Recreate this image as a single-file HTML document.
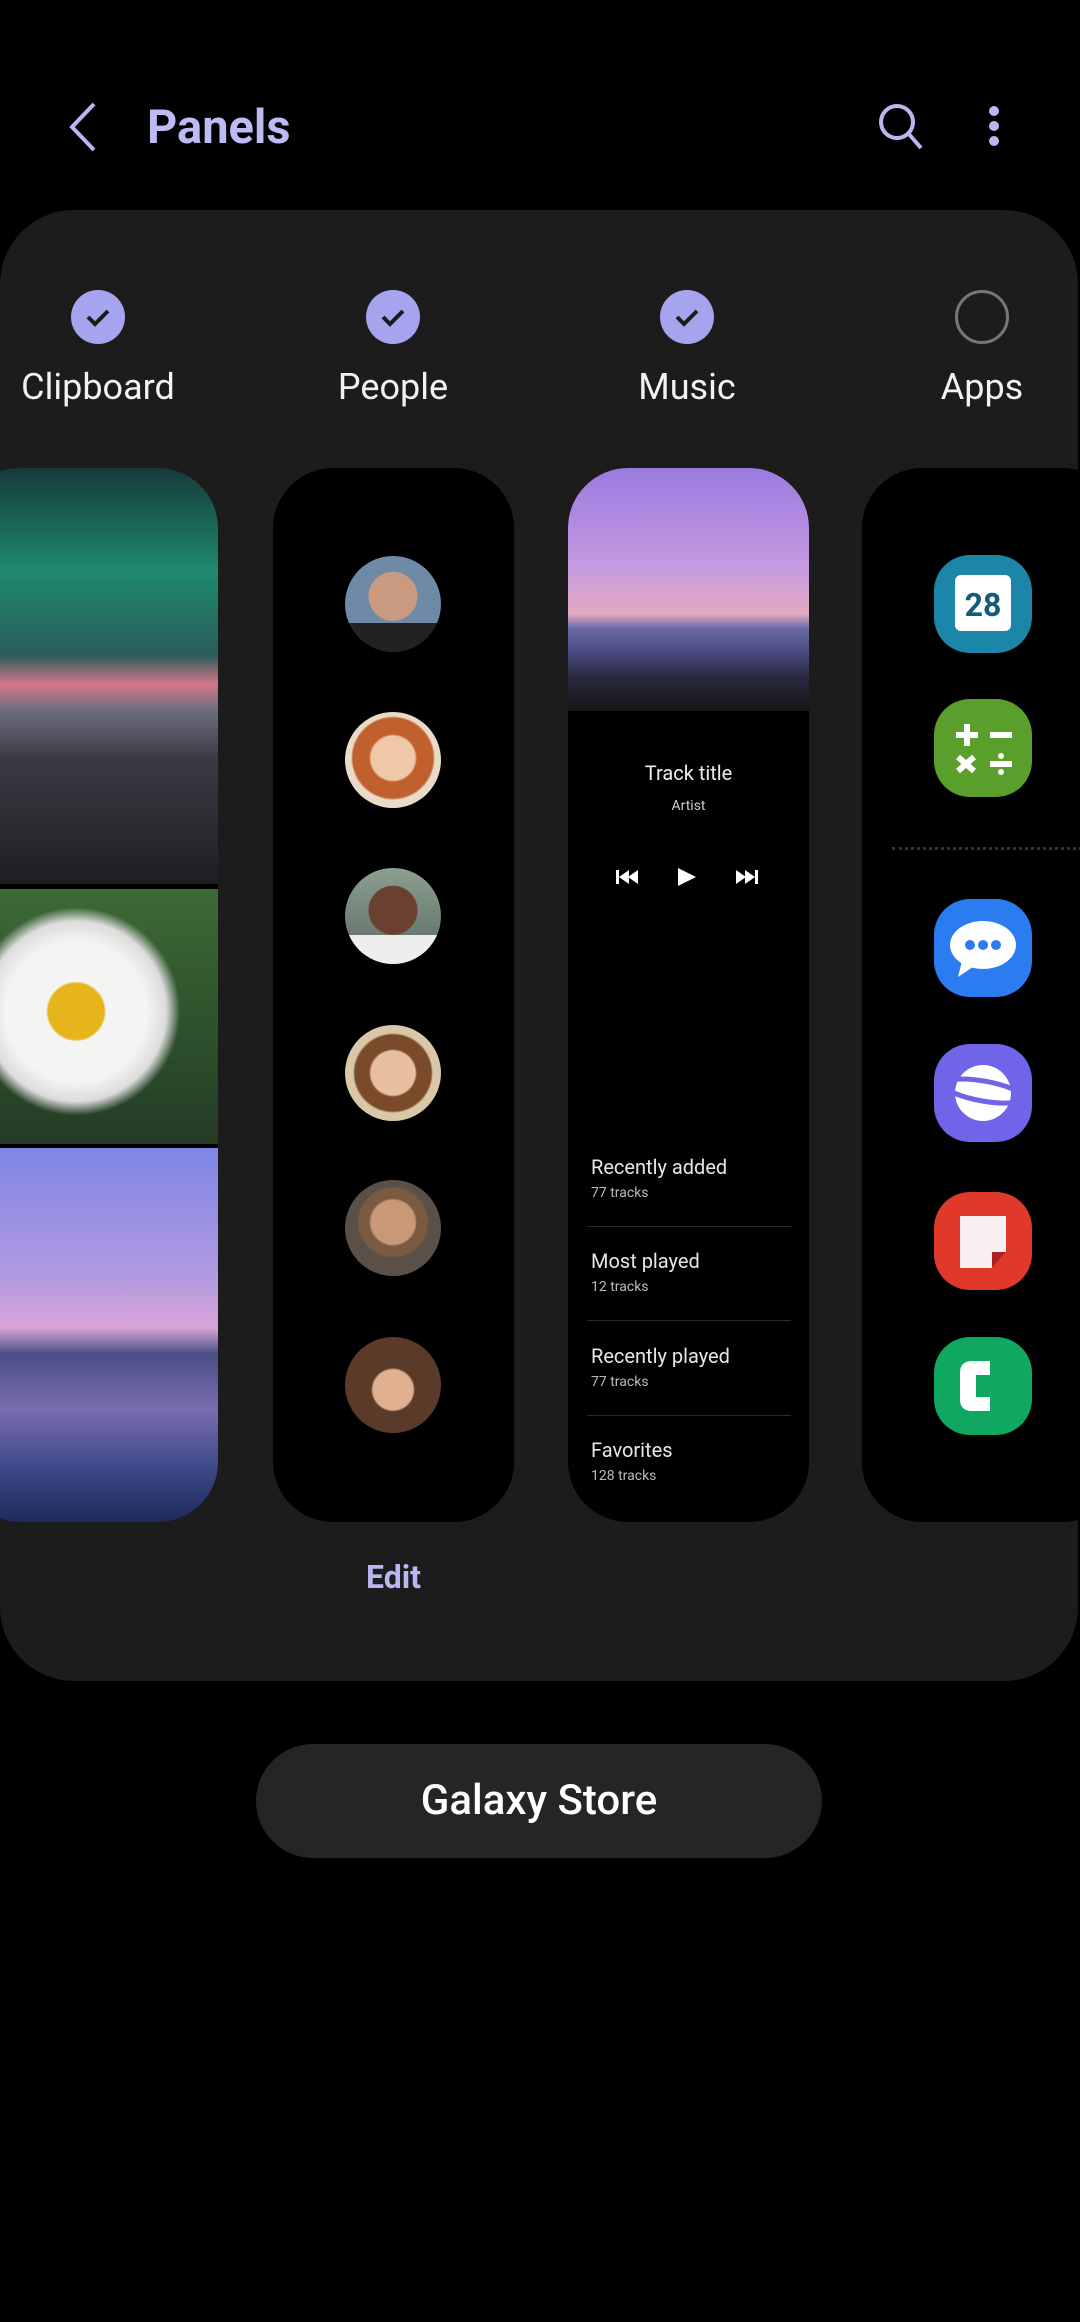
<!DOCTYPE html>
<html><head><meta charset="utf-8">
<style>
*{margin:0;padding:0;box-sizing:border-box}
body{width:1080px;height:2322px;background:#000;position:relative;overflow:hidden;font-family:"Roboto","Liberation Sans",sans-serif;color:#fff}
.abs{position:absolute}
.card{left:0;top:210px;width:1078px;height:1471px;background:#1c1c1c;border-radius:74px}
.chk{width:54px;height:54px;border-radius:50%;background:#a6a4ee;top:290px}
.chk svg{position:absolute;left:0;top:0}
.lbl{top:366px;font-size:36px;width:240px;text-align:center;color:#f2f2f2}
.panel{top:468px;height:1054px;background:#000;border-radius:60px;overflow:hidden}
.av{width:96px;height:96px;border-radius:50%;left:345px;overflow:hidden}
.item{left:591px;font-size:20px;color:#e6e6e6}
.item small{display:block;font-size:14px;color:#bbb;margin-top:6px}
.div{left:587px;width:204px;height:1px;background:#2a2a2a}
.app{left:934px;width:98px;height:98px;border-radius:36px}
</style></head><body>
<svg class="abs" style="left:62px;top:100px" width="40" height="54" viewBox="0 0 40 54"><path d="M32 4 L10 27 L32 50" fill="none" stroke="#b9b7f2" stroke-width="4"/></svg>
<div class="abs" style="left:147px;top:100px;font-size:47px;font-weight:bold;color:#bdbbf4">Panels</div>
<svg class="abs" style="left:874px;top:100px" width="54" height="54" viewBox="0 0 54 54"><circle cx="23" cy="22" r="16" fill="none" stroke="#b9b7f2" stroke-width="4"/><path d="M34 33 L47 48" stroke="#b9b7f2" stroke-width="4"/></svg>
<div class="abs" style="left:989px;top:106px;width:10px;height:10px;border-radius:50%;background:#b9b7f2"></div>
<div class="abs" style="left:989px;top:121px;width:10px;height:10px;border-radius:50%;background:#b9b7f2"></div>
<div class="abs" style="left:989px;top:136px;width:10px;height:10px;border-radius:50%;background:#b9b7f2"></div>

<div class="abs card"></div>
<div class="abs chk" style="left:71px"><svg width="54" height="54"><path d="M17 27 L24 34 L37 21" fill="none" stroke="#1c1c1c" stroke-width="4"/></svg></div>
<div class="abs chk" style="left:366px"><svg width="54" height="54"><path d="M17 27 L24 34 L37 21" fill="none" stroke="#1c1c1c" stroke-width="4"/></svg></div>
<div class="abs chk" style="left:660px"><svg width="54" height="54"><path d="M17 27 L24 34 L37 21" fill="none" stroke="#1c1c1c" stroke-width="4"/></svg></div>
<div class="abs chk" style="left:955px;background:none;border:3px solid #777"></div>
<div class="abs lbl" style="left:-22px">Clipboard</div>
<div class="abs lbl" style="left:273px">People</div>
<div class="abs lbl" style="left:567px">Music</div>
<div class="abs lbl" style="left:862px">Apps</div>

<div class="abs panel" style="left:-40px;width:258px">
 <div class="abs" style="left:0;top:0;width:258px;height:416px;background:linear-gradient(180deg,#163a3a 0%,#1f8a6e 25%,#2a5c5a 45%,#d4758a 52%,#6f6e80 58%,#3a3a44 70%,#1e1e22 100%)"></div>
 <div class="abs" style="left:0;top:421px;width:258px;height:255px;background:radial-gradient(circle at 45% 48%,#e6b51c 0 28px,#f4f4f2 30px 70px,#dcdcdc 90px,transparent 104px),linear-gradient(180deg,#3d6a36,#2a4a2a 70%,#253a25)"></div>
 <div class="abs" style="left:0;top:680px;width:258px;height:374px;background:linear-gradient(180deg,#7d86e6 0%,#b39ae0 35%,#d9a5d8 48%,#4a4f86 55%,#7a6cb0 70%,#3e4a8a 85%,#1e2a5a 100%)"></div>
</div>
<div class="abs panel" style="left:273px;width:241px"></div>
<div class="abs av" style="top:556px;background:radial-gradient(circle at 50% 42%,#c99a80 0 24px,transparent 25px),linear-gradient(180deg,#6e8aa6 0,#6e8aa6 70%,#222 70%)"></div>
<div class="abs av" style="top:712px;background:radial-gradient(circle at 50% 48%,#f0c8a8 0 22px,#c0602c 24px 40px,#e8dcc8 42px)"></div>
<div class="abs av" style="top:868px;background:radial-gradient(circle at 50% 44%,#6a4030 0 24px,transparent 25px),linear-gradient(180deg,#8aa090,#6a7a70 70%,#eee 70%)"></div>
<div class="abs av" style="top:1025px;background:radial-gradient(circle at 50% 50%,#e8c0a0 0 22px,#7a4a2a 24px 38px,#d8c8a8 40px)"></div>
<div class="abs av" style="top:1180px;background:radial-gradient(circle at 50% 44%,#c89878 0 22px,#7a5a40 24px 34px,#5a5048 36px)"></div>
<div class="abs av" style="top:1337px;background:radial-gradient(circle at 50% 55%,#e0b090 0 20px,#5a3a28 22px,#5a3a28 100%),linear-gradient(#d8ccc0,#d8ccc0)"></div>

<div class="abs panel" style="left:568px;width:241px">
 <div class="abs" style="left:0;top:0;width:241px;height:243px;background:linear-gradient(180deg,#9a7ae0 0%,#c49ae0 40%,#e4a8c0 60%,#6a6aa8 66%,#4a4a80 76%,#2a2a40 86%,#151518 100%)"></div>
 <div class="abs" style="left:0;top:293px;width:241px;text-align:center;font-size:20px;color:#eee">Track title</div>
 <div class="abs" style="left:0;top:330px;width:241px;text-align:center;font-size:14px;color:#ccc">Artist</div>
 <svg class="abs" style="left:48px;top:398px" width="150" height="22" viewBox="0 0 150 22"><path d="M0 4h3v14h-3z M3 11l10-7v14z M12 11l10-7v14z" fill="#fff"/><path d="M62 2l18 9-18 9z" fill="#fff"/><path d="M120 4l10 7-10 7z M129 4l10 7-10 7z M139 4h3v14h-3z" fill="#fff"/></svg>
</div>
<div class="abs item" style="top:1155px">Recently added<small>77 tracks</small></div>
<div class="abs div" style="top:1226px"></div>
<div class="abs item" style="top:1249px">Most played<small>12 tracks</small></div>
<div class="abs div" style="top:1320px"></div>
<div class="abs item" style="top:1344px">Recently played<small>77 tracks</small></div>
<div class="abs div" style="top:1415px"></div>
<div class="abs item" style="top:1438px">Favorites<small>128 tracks</small></div>

<div class="abs panel" style="left:862px;width:260px"></div>
<div class="abs app" style="top:555px;background:#1b86a8"><div class="abs" style="left:21px;top:20px;width:56px;height:56px;background:#fff;border-radius:6px;color:#145a7a;font-weight:bold;font-size:32px;text-align:center;line-height:60px">28</div></div>
<div class="abs app" style="top:699px;background:#5a9e2c"><svg width="98" height="98"><path d="M22 36h22M33 25v22M56 36h22M24 58l16 14M40 58l-16 14M56 65h22" stroke="#fff" stroke-width="6"/><circle cx="67" cy="57" r="3" fill="#fff"/><circle cx="67" cy="73" r="3" fill="#fff"/></svg></div>
<div class="abs" style="left:892px;top:847px;width:190px;border-top:3px dotted #333"></div>
<div class="abs app" style="top:899px;background:#2a7cf0"><svg width="98" height="98"><ellipse cx="49" cy="46" rx="33" ry="24" fill="#fff"/><path d="M28 62 L24 78 L42 66z" fill="#fff"/><circle cx="36" cy="46" r="5" fill="#2a7cf0"/><circle cx="49" cy="46" r="5" fill="#2a7cf0"/><circle cx="62" cy="46" r="5" fill="#2a7cf0"/></svg></div>
<div class="abs app" style="top:1044px;background:#7064e8"><svg width="98" height="98"><circle cx="49" cy="49" r="28" fill="#fff"/><ellipse cx="49" cy="47" rx="40" ry="10" fill="none" stroke="#7064e8" stroke-width="5" transform="rotate(10 49 49)"/></svg></div>
<div class="abs app" style="top:1192px;background:#e0382a"><svg width="98" height="98"><path d="M26 24h46v36l-14 16h-32z" fill="#f8f0f0"/><path d="M58 76l14-16h-14z" fill="#b02020"/></svg></div>
<div class="abs app" style="top:1337px;background:#10a860"><svg width="98" height="98"><path d="M56 24h-18q-12 0-12 12v26q0 12 12 12h18v-14h-14v-22h14z" fill="#fff"/></svg></div>

<div class="abs" style="left:273px;top:1558px;width:241px;text-align:center;font-size:32px;font-weight:bold;color:#b9b7f2">Edit</div>

<div class="abs" style="left:256px;top:1744px;width:566px;height:114px;border-radius:57px;background:#252525;text-align:center;line-height:114px;font-size:42px;font-weight:500;color:#fff">Galaxy Store</div>
</body></html>
